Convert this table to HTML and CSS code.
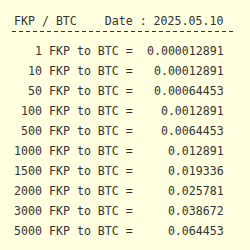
FILE: index.html
```html
<!DOCTYPE html>
<html>
<head>
<meta charset="utf-8">
<link rel="stylesheet" href="styles.css">
</head>
<body>
<div class="card">
  <div class="header">FKP / BTC    Date : 2025.05.10</div>
  <div class="divider"></div>
  <div class="rates">
    <div class="row"><span class="amount">1</span><span class="pair"> FKP to BTC = </span><span class="value">0.000012891</span></div>
    <div class="row"><span class="amount">10</span><span class="pair"> FKP to BTC = </span><span class="value">0.00012891</span></div>
    <div class="row"><span class="amount">50</span><span class="pair"> FKP to BTC = </span><span class="value">0.00064453</span></div>
    <div class="row"><span class="amount">100</span><span class="pair"> FKP to BTC = </span><span class="value">0.0012891</span></div>
    <div class="row"><span class="amount">500</span><span class="pair"> FKP to BTC = </span><span class="value">0.0064453</span></div>
    <div class="row"><span class="amount">1000</span><span class="pair"> FKP to BTC = </span><span class="value">0.012891</span></div>
    <div class="row"><span class="amount">1500</span><span class="pair"> FKP to BTC = </span><span class="value">0.019336</span></div>
    <div class="row"><span class="amount">2000</span><span class="pair"> FKP to BTC = </span><span class="value">0.025781</span></div>
    <div class="row"><span class="amount">3000</span><span class="pair"> FKP to BTC = </span><span class="value">0.038672</span></div>
    <div class="row"><span class="amount">5000</span><span class="pair"> FKP to BTC = </span><span class="value">0.064453</span></div>
  </div>
</div>
</body>
</html>
```
FILE: styles.css
```css
body {
  margin: 0;
  background: #ffffe0;
  color: #333333;
  font-family: "DejaVu Sans Mono", monospace;
  font-size: 11.6px;
  line-height: 20px;
}
.card {
  padding: 11px 0 0 14px;
}
.header {
  white-space: pre;
}
.divider {
  height: 1px;
  width: 224px;
  margin-left: -2px;
  background: repeating-linear-gradient(to right, #333333 0 4px, transparent 4px 7px);
}
.rates {
  margin-top: 9px;
}
.row {
  display: flex;
  white-space: pre;
}
.amount {
  width: 28px;
  text-align: right;
}
.value {
  width: 84px;
  text-align: right;
}
```
